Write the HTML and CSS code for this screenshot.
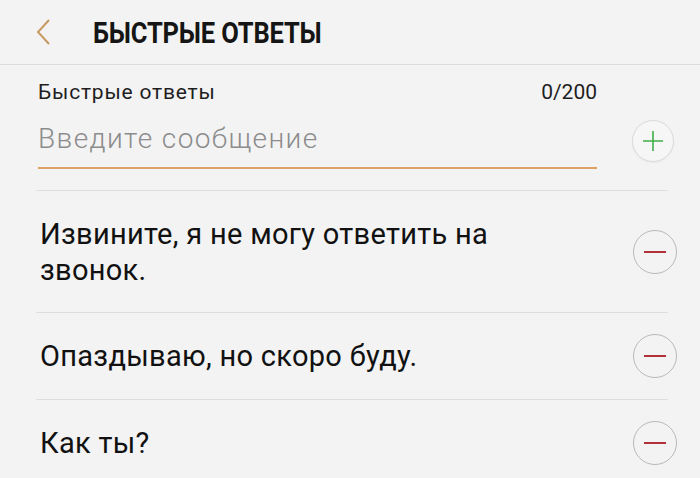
FILE: index.html
```html
<!DOCTYPE html>
<html lang="ru">

<head>
    <meta charset="UTF-8">
    <meta name="viewport" content="width=device-width, initial-scale=1.0">
    <title>Быстрые ответы</title>
    <link rel="stylesheet" href="styles.css">
</head>

<body>
    <div class="header">
        <svg class="back" width="16" height="28" viewBox="0 0 16 28">
            <polyline points="14,2 3,14 14,26" fill="none" stroke="#c89a63" stroke-width="2" />
        </svg>
        <span class="title">БЫСТРЫЕ ОТВЕТЫ</span>
    </div>

    <div class="compose">
        <div class="field">
            <div class="field-top">
                <span class="label">Быстрые ответы</span>
                <span class="counter">0/200</span>
            </div>
            <div class="input">Введите сообщение</div>
        </div>
        <div class="round add">
            <svg width="22" height="22" viewBox="0 0 22 22">
                <path d="M11 1v20M1 11h20" stroke="#3fae49" stroke-width="1.6" />
            </svg>
        </div>
    </div>
    <div class="divider"></div>

    <div class="item tall">
        <p>Извините, я не могу ответить на звонок.</p>
        <div class="round remove"><span></span></div>
    </div>
    <div class="divider"></div>
    <div class="item">
        <p>Опаздываю, но скоро буду.</p>
        <div class="round remove"><span></span></div>
    </div>
    <div class="divider"></div>
    <div class="item">
        <p>Как ты?</p>
        <div class="round remove"><span></span></div>
    </div>
</body>

</html>
```

FILE: styles.css
```css
body {
    margin: 0;
    background-color: #f3f3f3;
    font-family: Roboto, "Noto Sans", sans-serif;
    color: #111;
    overflow: hidden;
}

.header {
    display: flex;
    align-items: center;
    height: 64px;
    padding-left: 35px;
    border-bottom: 1px solid #dcdcdc;
}

.back {
    margin-right: 42px;
}

.title {
    display: inline-block;
    font-size: 30px;
    font-weight: 700;
    color: #151515;
    transform: scaleX(0.85);
    transform-origin: left center;
    letter-spacing: -0.2px;
}

.compose {
    display: flex;
    align-items: flex-end;
    padding: 0 26px 0 38px;
}

.field {
    flex: 1;
}

.field-top {
    display: flex;
    justify-content: space-between;
    align-items: baseline;
    padding-top: 15px;
    font-size: 21px;
    line-height: 24px;
    color: #1e1e1e;
}

.label {
    letter-spacing: 0.8px;
}

.input {
    margin-top: 17px;
    font-size: 28px;
    font-weight: 300;
    letter-spacing: 1.4px;
    line-height: 36px;
    color: #8c8c8c;
    padding-bottom: 10px;
    border-bottom: 2px solid #e0a263;
}

.round {
    flex: none;
    display: flex;
    align-items: center;
    justify-content: center;
    width: 42px;
    height: 42px;
    border-radius: 50%;
    box-sizing: border-box;
}

.add {
    margin: 0 0 7px 35px;
    border: 1px solid #dadada;
    background-color: #f6f6f6;
    box-shadow: 0 1px 2px rgba(0, 0, 0, .04);
}

.divider {
    height: 1px;
    margin: 21px 32px 0 36px;
    background-color: #dedede;
}

.item {
    display: flex;
    align-items: center;
    height: 121px;
    padding: 0 23px 0 40px;
}

.item + .divider + .item {
    height: 86px;
}

.item p {
    flex: 1;
    margin: 0;
    padding-right: 110px;
    font-size: 29px;
    letter-spacing: 0.3px;
    line-height: 36px;
}

.item + .divider {
    margin-top: 0;
}

.remove {
    width: 44px;
    height: 44px;
    border: 1px solid #b9b9b9;
}

.remove span {
    width: 22px;
    height: 2px;
    background-color: #b3323a;
}
```
